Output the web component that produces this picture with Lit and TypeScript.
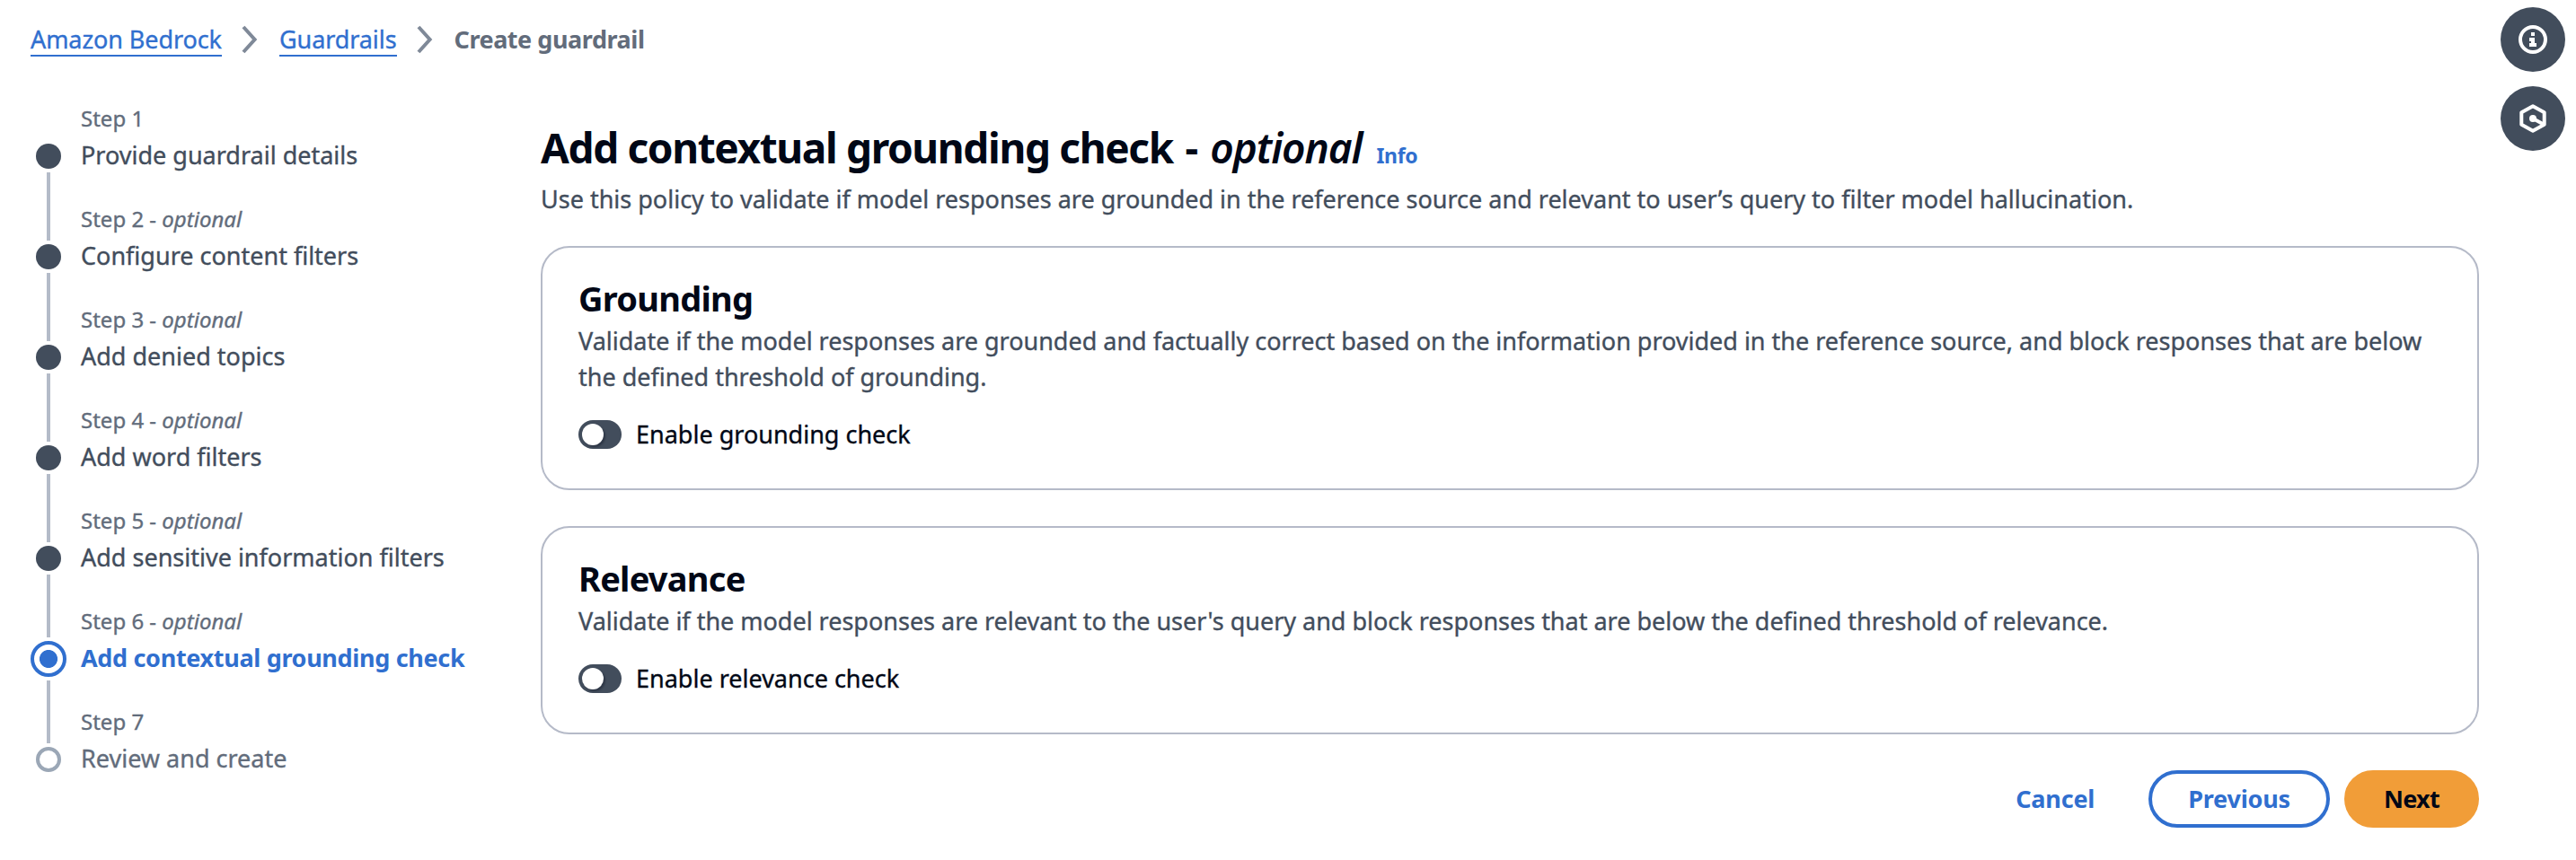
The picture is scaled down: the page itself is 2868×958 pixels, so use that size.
import { LitElement, html, css, svg, nothing } from "lit";
import { customElement } from "lit/decorators.js";
import { classMap } from "lit/directives/class-map.js";

type StepState = "done" | "active" | "pending";

interface WizardStep {
  name: string;
  optional: boolean;
  state: StepState;
}

interface CheckPanel {
  title: string;
  description: string;
  toggle: string;
}

const STEPS: WizardStep[] = [
  { name: "Provide guardrail details", optional: false, state: "done" },
  { name: "Configure content filters", optional: true, state: "done" },
  { name: "Add denied topics", optional: true, state: "done" },
  { name: "Add word filters", optional: true, state: "done" },
  { name: "Add sensitive information filters", optional: true, state: "done" },
  { name: "Add contextual grounding check", optional: true, state: "active" },
  { name: "Review and create", optional: false, state: "pending" },
];

const PANELS: CheckPanel[] = [
  {
    title: "Grounding",
    description:
      "Validate if the model responses are grounded and factually correct based on the information provided in the reference source, and block responses that are below the defined threshold of grounding.",
    toggle: "Enable grounding check",
  },
  {
    title: "Relevance",
    description:
      "Validate if the model responses are relevant to the user's query and block responses that are below the defined threshold of relevance.",
    toggle: "Enable relevance check",
  },
];

const chevron = html`<svg class="chevron" width="20" height="32" viewBox="0 0 20 32" aria-hidden="true">
  ${svg`<path d="M3 2 L15.6 16 L3 30" fill="none" stroke="#7f8998" stroke-width="4" />`}
</svg>`;

@customElement("app-root")
export class AppRoot extends LitElement {
  static styles = css`
    :host {
      display: flex;
      align-items: flex-start;
      width: 2868px;
      height: 958px;
      box-sizing: border-box;
      overflow: hidden;
      background: #fff;
      color: #424d5c;
      font-family: "Noto Sans", "Open Sans", sans-serif;
      font-size: 27px;
      line-height: 40px;
      -webkit-text-stroke-width: 0.35px;
    }
    h1, h2, p, ol { margin: 0; padding: 0; }
    ol { list-style: none; }
    .page { width: 2760px; }
    .crumbs {
      display: flex;
      align-items: flex-start;
      height: 40px;
      padding: 24px 0 0 34px;
      line-height: 40px;
    }
    .crumb-link {
      height: 37px;
      border-bottom: 2px solid #306fcf;
      color: #306fcf;
      letter-spacing: -0.08px;
    }
    .chevron { display: block; margin: 4px 23px 0 21px; }
    .crumb-current {
      color: #626c7b;
      font-weight: 700;
      letter-spacing: -0.45px;
      -webkit-text-stroke-width: 0;
    }
    .body { display: flex; }
    .nav { display: flex; width: 602px; padding-top: 52px; }
    .rail {
      display: flex;
      flex-direction: column;
      align-items: center;
      gap: 4px;
      width: 40px;
      margin-left: 34px;
      padding-top: 44px;
    }
    .line { width: 4px; height: 76px; background: #b4bbc8; }
    .line.short { height: 70px; }
    .dot {
      box-sizing: border-box;
      width: 28px;
      height: 28px;
      border-radius: 50%;
      background: #424d5c;
    }
    .dot.pending { background: #fff; border: 4px solid #9ba7b6; }
    .dot.active {
      width: 40px;
      height: 40px;
      border: 4px solid #306fcf;
      background: radial-gradient(circle, #306fcf 9.6px, #fff 10.4px);
    }
    .steps { margin-left: 16px; }
    .step { height: 112px; }
    .step-label { font-size: 24px; line-height: 32px; color: #626c7b; }
    .step-name { margin-top: 5px; white-space: nowrap; }
    .step-name.active {
      color: #306fcf;
      font-weight: 700;
      letter-spacing: -0.33px;
      -webkit-text-stroke-width: 0;
    }
    .step-name.pending { color: #626c7b; }
    .main { width: 2158px; padding-top: 70px; }
    .title {
      height: 60px;
      color: #000716;
      font-size: 46px;
      line-height: 60px;
      font-weight: 700;
      letter-spacing: -1.37px;
      white-space: nowrap;
      -webkit-text-stroke-width: 0;
    }
    .title-dash { margin: 0 4px 0 3px; }
    .title-optional { font-weight: 600; letter-spacing: -1.1px; }
    .info {
      margin-left: 16px;
      color: #306fcf;
      font-size: 23px;
      line-height: 1;
      font-weight: 700;
      letter-spacing: -0.3px;
    }
    .lead { margin-top: 8px; }
    .card {
      margin-top: 32px;
      padding: 32px 40px 40px;
      border: 2px solid #b5bac8;
      border-radius: 32px;
    }
    .card + .card { margin-top: 40px; }
    .card-title {
      color: #000716;
      font-size: 38px;
      line-height: 48px;
      font-weight: 700;
      letter-spacing: -0.75px;
      -webkit-text-stroke-width: 0;
    }
    .card-text { margin-top: 4px; letter-spacing: -0.01px; }
    .toggle { display: flex; align-items: center; gap: 16px; margin-top: 24px; color: #000716; }
    .switch {
      display: flex;
      align-items: center;
      box-sizing: border-box;
      width: 48px;
      height: 32px;
      padding: 0 4px;
      border-radius: 16px;
      background: #424d5c;
    }
    .knob {
      width: 24px;
      height: 24px;
      border-radius: 50%;
      background: #fff;
      box-shadow: 2px 2px 2px rgba(0, 7, 22, 0.3);
    }
    .actions { display: flex; justify-content: flex-end; gap: 16px; margin-top: 40px; }
    .button {
      box-sizing: border-box;
      height: 64px;
      padding: 0 40px;
      border: 4px solid transparent;
      border-radius: 32px;
      background: transparent;
      color: #306fcf;
      font: 700 27px/56px "Noto Sans", "Open Sans", sans-serif;
      letter-spacing: -0.2px;
      -webkit-text-stroke-width: 0;
    }
    .button.outlined { border-color: #306fcf; }
    .button.primary {
      background: #f19d38;
      border-color: #f19d38;
      color: #000716;
      letter-spacing: -0.7px;
    }
    .tools { display: flex; flex-direction: column; gap: 16px; padding: 8px 0 0 24px; }
    .tool { width: 72px; height: 72px; border-radius: 50%; background: #424d5c; }
    .tool svg { display: block; }
  `;

  private renderRail() {
    return STEPS.map((step, i) => {
      const short = step.state === "active" || STEPS[i + 1]?.state === "active";
      return html`<span class=${classMap({ dot: true, [step.state]: true })}></span>
        ${i < STEPS.length - 1 ? html`<span class=${classMap({ line: true, short })}></span>` : nothing}`;
    });
  }

  private renderStep(step: WizardStep, i: number) {
    return html`<li class="step">
      <div class="step-label">Step ${i + 1}${step.optional ? html` - <i>optional</i>` : nothing}</div>
      <div class=${classMap({ "step-name": true, [step.state]: true })}>${step.name}</div>
    </li>`;
  }

  private renderPanel(panel: CheckPanel) {
    return html`<section class="card">
      <h2 class="card-title">${panel.title}</h2>
      <p class="card-text">${panel.description}</p>
      <div class="toggle">
        <span class="switch" role="switch" aria-checked="false"><span class="knob"></span></span>
        <span>${panel.toggle}</span>
      </div>
    </section>`;
  }

  render() {
    return html`
      <div class="page">
        <nav class="crumbs">
          <a class="crumb-link">Amazon Bedrock</a>${chevron}
          <a class="crumb-link">Guardrails</a>${chevron}
          <span class="crumb-current">Create guardrail</span>
        </nav>
        <div class="body">
          <aside class="nav">
            <div class="rail">${this.renderRail()}</div>
            <ol class="steps">${STEPS.map((s, i) => this.renderStep(s, i))}</ol>
          </aside>
          <main class="main">
            <h1 class="title">Add contextual grounding check <span class="title-dash">-</span> <i class="title-optional">optional</i><a class="info">Info</a></h1>
            <p class="lead">Use this policy to validate if model responses are grounded in the reference source and relevant to user’s query to filter model hallucination.</p>
            ${PANELS.map((p) => this.renderPanel(p))}
            <div class="actions">
              <button class="button">Cancel</button>
              <button class="button outlined">Previous</button>
              <button class="button primary">Next</button>
            </div>
          </main>
        </div>
      </div>
      <div class="tools">
        <div class="tool">
          <svg width="72" height="72" viewBox="0 0 72 72">
            <circle cx="36" cy="36" r="14" fill="none" stroke="#fff" stroke-width="4" />
            <path d="M34 28h4v4h-4zM32 34h6v6h2v4h-8v-4h2v-2h-2z" fill="#fff" />
          </svg>
        </div>
        <div class="tool">
          <svg width="72" height="72" viewBox="0 0 72 72">
            <path d="M36 22.2 L48.7 29.2 V42.8 L36 49.8 L23.3 42.8 V29.2 Z" fill="none" stroke="#fff" stroke-width="4" stroke-linejoin="round" />
            <circle cx="36" cy="36" r="4" fill="#fff" />
            <path d="M36 36 L47.5 42.2" stroke="#fff" stroke-width="4" />
          </svg>
        </div>
      </div>
    `;
  }
}
